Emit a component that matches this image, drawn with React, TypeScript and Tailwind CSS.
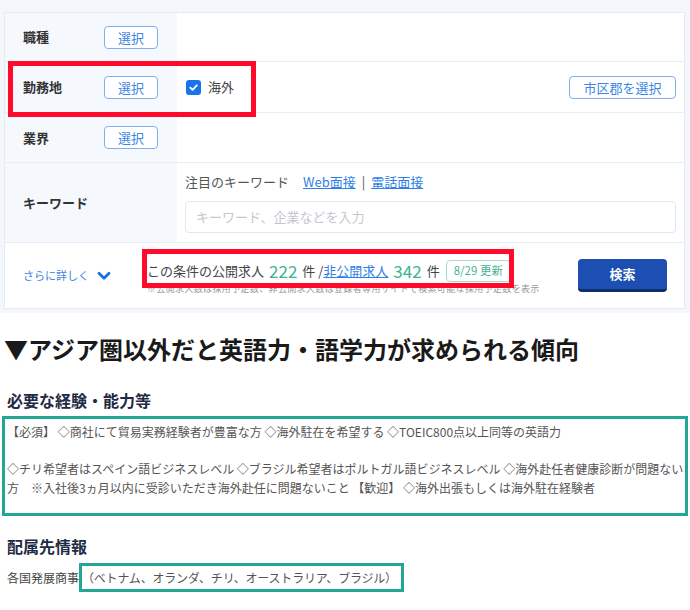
const SelectButton = ({ label, className = "" }: { label: string; className?: string }) => (
  <button
    className={`h-[23px] rounded-[4px] border border-[#7fb0ee] bg-white text-[13px] leading-none text-[#3d86e3] ${className}`}
  >
    {label}
  </button>
);

const Row = ({
  label,
  height,
  children,
}: {
  label: string;
  height: string;
  children?: React.ReactNode;
}) => (
  <div className={`flex ${height} border-b border-[#e8edf4]`}>
    <div className="flex w-[172px] items-center bg-[#f5f8fc] pl-[18px]">
      <span className="w-[81px] text-[13px] font-bold text-[#333]">{label}</span>
      <SelectButton label="選択" className="w-[54px]" />
    </div>
    <div className="flex flex-1 items-center pl-[9px] pr-[8px]">{children}</div>
  </div>
);

export default function App() {
  return (
    <div className="relative h-[610px] w-[690px] overflow-hidden bg-white font-['Noto_Sans_CJK_JP',sans-serif]">
      {/* search panel */}
      <div className="bg-[#f3f6fb] pb-1 pl-1 pr-[5px] pt-3">
        <div className="border border-[#e6ebf2] bg-white">
          <Row label="職種" height="h-[49px]" />
          <Row label="勤務地" height="h-[51px]">
            <span className="flex h-[15px] w-[15px] items-center justify-center rounded-[3px] bg-[#1a73e8]">
              <svg width="11" height="11" viewBox="0 0 12 12">
                <path d="M2.5 6.2 L5 8.6 L9.6 3.6" fill="none" stroke="#fff" strokeWidth="2" strokeLinecap="round" strokeLinejoin="round" />
              </svg>
            </span>
            <span className="ml-[7px] text-[13px] text-[#444]">海外</span>
            <SelectButton label="市区郡を選択" className="ml-auto w-[107px]" />
          </Row>
          <Row label="業界" height="h-[50px]" />
          <div className="flex h-[80px] border-b border-[#e8edf4]">
            <div className="flex w-[172px] items-center bg-[#f5f8fc] pl-[18px]">
              <span className="text-[13px] font-bold text-[#333]">キーワード</span>
            </div>
            <div className="flex flex-1 flex-col pl-[8px] pr-[8px] pt-[9px]">
              <div className="flex items-center text-[13px] leading-[20px] text-[#555]">
                <span>注目のキーワード</span>
                <span className="ml-[14px] text-[#2f7fe6] underline">Web面接</span>
                <span className="mx-[6px] text-[#555]">|</span>
                <span className="text-[#2f7fe6] underline">電話面接</span>
              </div>
              <div className="mt-[9px] flex h-[32px] items-center rounded-[4px] border border-[#e3e8ef] pl-[10px] text-[13px] text-[#c3c7cf]">
                キーワード、企業などを入力
              </div>
            </div>
          </div>
          <div className="flex h-[65px] items-center pl-[18px] pr-[17px]">
            <div className="flex w-[124px] items-center">
              <span className="text-[11px] text-[#3d86e3]">さらに詳しく</span>
              <svg className="ml-[8px]" width="14" height="10" viewBox="0 0 14 10">
                <path d="M2 2.2 L7 7.2 L12 2.2" fill="none" stroke="#1a6fe0" strokeWidth="2.8" strokeLinecap="round" strokeLinejoin="round" />
              </svg>
            </div>
            <div className="flex flex-col pt-[4px]">
              <div className="flex h-[22px] items-center text-[13px] text-[#444]">
                <span>この条件の公開求人</span>
                <span className="ml-[5px] text-[17px] text-[#3bb48d]">222</span>
                <span className="ml-[5px]">件 /</span>
                <span className="text-[#2f7fe6] underline">非公開求人</span>
                <span className="ml-[5px] text-[17px] text-[#3bb48d]">342</span>
                <span className="ml-[5px]">件</span>
                <span className="ml-[6px] flex h-[22px] items-center rounded-[4px] border border-[#a7dcc7] px-[7px] text-[11.5px] text-[#4bb393]">
                  8/29 更新
                </span>
              </div>
              <div className="mt-[1px] text-[9px] leading-[12px] tracking-[0.35px] text-[#999]">
                ※公開求人数は採用予定数、非公開求人数は登録者専用サイトで検索可能な採用予定数を表示
              </div>
            </div>
            <button className="ml-auto h-[33px] w-[89px] rounded-[4px] border-b-[3px] border-[#0f2d6b] bg-[#1c4fb1] text-[13px] font-bold text-white">
              検索
            </button>
          </div>
        </div>
      </div>

      {/* article */}
      <h2 className="mt-[20px] pl-[4px] text-[24px] font-bold leading-[32px] text-[#1a1a1a]">
        ▼アジア圏以外だと英語力・語学力が求められる傾向
      </h2>
      <h3 className="mt-[23px] pl-[7px] text-[16px] font-bold leading-[24px] text-[#1f2a44]">必要な経験・能力等</h3>
      <div className="ml-[2px] mt-[4px] h-[100px] w-[686px] border-[3px] border-[#22a795] pl-[2px] pt-[4px] text-[12px] leading-[18.5px] text-[#555]">
        【必須】 ◇商社にて貿易実務経験者が豊富な方 ◇海外駐在を希望する ◇TOEIC800点以上同等の英語力
        <br />
        <br />
        <span className="whitespace-nowrap">
          ◇チリ希望者はスペイン語ビジネスレベル ◇ブラジル希望者はポルトガル語ビジネスレベル ◇海外赴任者健康診断が問題ない
        </span>
        <br />
        方　※入社後3ヵ月以内に受診いただき海外赴任に問題ないこと 【歓迎】 ◇海外出張もしくは海外駐在経験者
      </div>
      <h3 className="mt-[18px] pl-[7px] text-[16px] font-bold leading-[24px] text-[#1f2a44]">配属先情報</h3>
      <div className="mt-[5px] flex items-center pl-[7px] text-[12px] text-[#444]">
        <span>各国発展商事</span>
        <span className="flex h-[29px] items-center border-[3px] border-[#22a795] pr-[4px] tracking-[-0.2px] text-[#555]">
          （ベトナム、オランダ、チリ、オーストラリア、ブラジル）
        </span>
      </div>

      {/* highlight overlays */}
      <div className="absolute left-[8px] top-[61px] h-[56px] w-[248px] border-[5px] border-[#ff0a2a]" />
      <div className="absolute left-[142px] top-[249px] h-[39px] w-[372px] border-[5px] border-[#ff0a2a]" />
    </div>
  );
}
